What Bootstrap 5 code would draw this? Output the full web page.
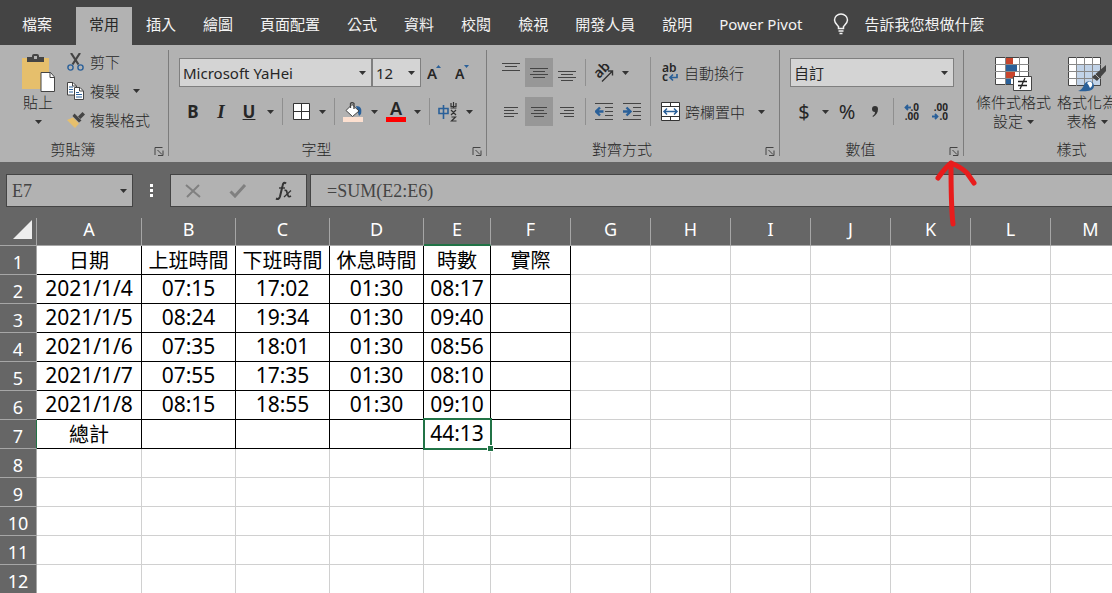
<!DOCTYPE html>
<html lang="zh-Hant">
<head>
<meta charset="utf-8">
<meta name="viewport" content="width=device-width, initial-scale=1">
<title>工時表</title>
<link href="https://cdn.jsdelivr.net/npm/bootstrap@5.3.0/dist/css/bootstrap.min.css" rel="stylesheet">
<style>
  :root { --chrome: #666; --panel: #b2b2b2; --ink: #262626; --blue: #2a6099; --green: #217346; }
  body { font-family: "Noto Sans", "Noto Sans CJK TC", sans-serif; font-size: 15px; line-height: 20px; color: var(--ink); background: #fff; overflow-x: hidden; }
  button { font: inherit; color: inherit; background: none; border: 0; padding: 0; }
  svg { display: block; flex: none; }
  svg text { font-family: "Noto Sans", "Noto Sans CJK TC", sans-serif; stroke: none; fill: #262626; }

  /* tab strip */
  .tabstrip { background: #444; padding: 7px 0 0 9px; white-space: nowrap; }
  .tabstrip .nav-link { color: #f3f3f3; padding: 7px 13px 11px; line-height: 20px; border-radius: 0; }
  .tabstrip .nav-link.active { background: var(--panel); color: var(--ink); }
  .tabstrip .file-tab { margin-right: 10px; }
  .tabs { gap: 1px; }
  .tell-me { gap: 15px; margin-left: 18px; padding-bottom: 4px; color: #f3f3f3; }

  /* ribbon */
  .ribbon { background: var(--panel); padding: 5px 0 6px; position: relative; z-index: 2; font-weight: 300; }
  .ribbon-group { display: flex; flex-direction: column; flex: none; height: 106px; border-right: 1px solid #7c7c7c; white-space: nowrap; }
  .g-clip { width: 169px; } .g-font { width: 318px; } .g-align { width: 293px; } .g-num { width: 184px; }
  .g-style { width: 215px; border: 0; }
  .group-body { flex: 1; }
  .group-name { position: relative; text-align: center; line-height: 14px; padding-right: 22px; }
  .g-style .group-name { padding-right: 0; }
  .launcher { position: absolute; right: 4px; bottom: 0; }
  .tools { display: flex; flex-direction: column; gap: 10px; padding: 8px 9px 0 10px; }
  .tool-row { display: flex; align-items: center; height: 29px; }
  .tool { width: 28px; height: 29px; display: flex; align-items: center; justify-content: center; flex: none; font-size: 17px; font-weight: 700; }
  .tool.on { background: #979797; }
  .tool.slant { font-family: "Liberation Serif", serif; font-style: italic; font-size: 19px; }
  .drop { width: 15px; height: 29px; display: flex; align-items: center; justify-content: center; flex: none; }
  .rule { width: 1px; height: 27px; margin: 0 4px; background: #8f8f8f; }
  .rule-tall { height: 69px; margin: 7px 0 0; }
  .ribbon .form-select { height: 29px; padding: 0 20px 0 3px; border: 1px solid #7f7f7f; border-radius: 0; background-color: #d4d4d4; font-size: 15px; line-height: 20px; color: var(--ink); }
  .form-select { background-image: url("data:image/svg+xml,%3Csvg xmlns='http://www.w3.org/2000/svg' viewBox='0 0 7 4'%3E%3Cpath d='M0 0h7L3.500 4z' fill='%23333'/%3E%3C/svg%3E"); background-size: 7px 4px; background-position: right 5px center; }
  .ribbon .family { width: 193px; } .ribbon .size { width: 49px; }
  .labelled { display: flex; align-items: center; gap: 5px; height: 29px; }
  .paste { margin-left: 20px; }
  .clip-col { display: flex; flex-direction: column; gap: 5px; padding-left: 3px; }
  .clip-col .labelled { height: 24px; }
  .large { display: flex; flex-direction: column; align-items: center; line-height: 19px; }
  .large-row { display: flex; gap: 6px; padding: 7px 0 0 12px; }
  .tool.money { font-weight: 400; font-size: 20px; }

  /* formula bar */
  .formula-bar { background: var(--chrome); padding: 12px 0 11px 6px; }
  .bar-box { height: 33px; border: 1px solid #444; border-radius: 0; background-color: var(--panel); }
  .formula-bar .form-control, .formula-bar .form-select { font-family: "Liberation Serif", serif; font-size: 18px; color: #444; padding: 2px 6px 0; }
  .formula-bar .form-select.name-box { width: 127px; padding: 2px 20px 0 5px; background-color: var(--panel); }
  .formula-bar .form-control { padding-left: 16px; border-right: 0; }
  .fx-box { width: 137px; margin-right: 3px; }
  .grip { width: 37px; flex: none; }

  /* grid */
  .sheet-wrap { overflow: hidden; }
  .sheet { table-layout: fixed; border-collapse: separate; border-spacing: 0; width: 1131px; text-align: center; }
  .sheet th, .sheet td { height: 29px; padding: 0; white-space: nowrap; border: 0 solid #d0d0d0; border-width: 0 1px 1px 0; }
  .sheet th { background: var(--chrome); color: #fff; font-weight: 400; font-size: 18px; border-color: #a6a6a6; }
  .sheet thead th { height: 28px; line-height: 23px; padding-bottom: 4px; }
  .sheet tbody th { line-height: 24px; padding-top: 4px; }
  .sheet td { font-size: 20px; line-height: 26px; padding-top: 2px; color: #000; }
  .sheet td.num { font-size: 21px; padding: 0 0 2px; }
  .sheet thead th.current { border-bottom: 2px solid var(--green); padding-bottom: 3px; }
  .sheet td.boxed { border-color: #000; }
  .sheet tbody th.current { border-right-color: var(--green); }
  .selected { position: relative; }
  .selected::before { content: ""; position: absolute; inset: -2px -2px -2px -1px; border: 2px solid var(--green); }
  .selected::after { content: ""; position: absolute; right: -4px; bottom: -4px; width: 7px; height: 7px; background: var(--green); border: 1px solid #fff; }
  .pointer { position: absolute; right: -14px; top: 17px; pointer-events: none; }
</style>
</head>
<body>
<svg width="0" height="0" class="position-absolute" aria-hidden="true">
  <symbol id="caret" viewBox="0 0 7 4"><path d="M0 0h7L3.500 4z" fill="#333"/></symbol>
  <symbol id="launch" viewBox="0 0 9 9"><path d="M.5 8V.5H8M3 3l4.500 4.500M8.500 3.500v5h-5" fill="none" stroke="#444"/></symbol>
</svg>

<header class="tabstrip d-flex align-items-center">
  <nav class="tabs nav flex-nowrap" aria-label="功能區">
    <a class="nav-link file-tab" href="#">檔案</a>
    <a class="nav-link active" aria-current="page" href="#">常用</a>
    <a class="nav-link" href="#">插入</a>
    <a class="nav-link" href="#">繪圖</a>
    <a class="nav-link" href="#">頁面配置</a>
    <a class="nav-link" href="#">公式</a>
    <a class="nav-link" href="#">資料</a>
    <a class="nav-link" href="#">校閱</a>
    <a class="nav-link" href="#">檢視</a>
    <a class="nav-link" href="#">開發人員</a>
    <a class="nav-link" href="#">說明</a>
    <a class="nav-link" href="#">Power Pivot</a>
  </nav>
  <button class="tell-me d-flex align-items-center" type="button">
    <svg width="16" height="22" viewBox="0 0 16 22" fill="none" stroke="#f3f3f3" stroke-width="1.500"><path d="M5.500 15.500v-2C3.500 11.500 1.500 10 1.500 7a6.500 6 0 0 1 13 0c0 3-2 4.500-4 6.500v2zM5.500 18h5M6.500 20.500h3"/></svg>
    <span>告訴我您想做什麼</span>
  </button>
</header>

<section class="ribbon d-flex">
  <div class="ribbon-group g-clip">
    <div class="group-body d-flex">
      <button class="large paste pt-1 me-2" type="button">
        <svg width="36" height="39" viewBox="0 0 36 39"><path d="M2 4h27v31H2z" fill="#e6bf6c"/><path d="M7 3h5V2q0-2 2-2h3q2 0 2 2v1h5v5H7z" fill="#444"/><path d="M14 2h3v3h-3z" fill="#b2b2b2"/><path d="M21 18.500h9.500l4 4.500v14.500H21z" fill="#fff" stroke="#444"/><path d="M30 18.500v5h5" fill="none" stroke="#444"/></svg>
        <span>貼上</span>
        <svg class="mt-2" width="7" height="4"><use href="#caret"/></svg>
      </button>
      <div class="clip-col">
        <button class="labelled" type="button">
          <svg width="18" height="18" viewBox="0 0 18 18" fill="none"><path d="M4 0l7.500 11.500M13 0L5.500 11.500" stroke="#444" stroke-width="2.200"/><circle cx="3.500" cy="14.500" r="2.600" stroke="#2a6099" stroke-width="1.400"/><circle cx="13.500" cy="14.500" r="2.600" stroke="#2a6099" stroke-width="1.400"/></svg>
          <span>剪下</span>
        </button>
        <button class="labelled" type="button">
          <svg width="18" height="18" viewBox="0 0 18 18" fill="#fff" stroke="#444"><path d="M.5.500H6L9.500 4v9h-9z"/><path d="M7.500 5.500H13L16.500 9v8.500h-9z"/><path d="M2 5h4M2 7.500h4M2 10h4M9 10.500h3M9 12.500h6M9 15h6" stroke="#2a6099"/><path d="M5.500.500V4H9M12.500 5.500V9H16" fill="none"/></svg>
          <span>複製</span>
          <svg class="ms-2" width="7" height="4"><use href="#caret"/></svg>
        </button>
        <button class="labelled" type="button">
          <svg width="18" height="16" viewBox="0 0 18 16"><path d="M0 8l6-2.500 6 6L8 16z" fill="#e6bf6c"/><path d="M5.500 4l2-2.500 7 7-2.500 2z" fill="#444"/><path d="M11 4.500L15.500 0 18 2.500 13.500 7z" fill="#444"/></svg>
          <span>複製格式</span>
        </button>
      </div>
    </div>
    <div class="group-name">剪貼簿<button class="launcher" type="button" aria-label="剪貼簿設定"><svg width="10" height="9"><use href="#launch"/></svg></button></div>
  </div>

  <div class="ribbon-group g-font">
    <div class="group-body tools">
      <div class="tool-row">
        <select class="form-select family" aria-label="字型名稱"><option>Microsoft YaHei</option></select>
        <select class="form-select size" aria-label="字型大小"><option>12</option></select>
        <button class="tool" type="button" aria-label="放大字型"><svg width="16" height="18" viewBox="0 0 16 18"><text x="0" y="15" font-size="15" font-weight="600">A</text><path d="M9 4l2.500-3L14 4z" fill="#2a6099"/></svg></button>
        <button class="tool" type="button" aria-label="縮小字型"><svg width="16" height="18" viewBox="0 0 16 18"><text x="0" y="15" font-size="14" font-weight="600">A</text><path d="M9 1l2.500 3L14 1z" fill="#2a6099"/></svg></button>
      </div>
      <div class="tool-row">
        <button class="tool" type="button">B</button>
        <button class="tool slant" type="button">I</button>
        <button class="tool text-decoration-underline" type="button">U</button>
        <button class="drop" type="button" aria-label="底線選項"><svg width="7" height="4"><use href="#caret"/></svg></button>
        <span class="rule"></span>
        <button class="tool" type="button" aria-label="框線"><svg width="17" height="17" viewBox="0 0 17 17" fill="#fff" stroke="#333"><path d="M.5.500h16v16H.5zM8.500 0v17M0 8.500h17"/></svg></button>
        <button class="drop" type="button" aria-label="框線選項"><svg width="7" height="4"><use href="#caret"/></svg></button>
        <span class="rule"></span>
        <button class="tool" type="button" aria-label="填滿色彩"><svg width="20" height="20" viewBox="0 0 20 20"><path d="M0 15h20v5H0z" fill="#fde0d0"/><path d="M13 4c5 0 6 3 5 8l-2 2z" fill="#2a6099"/><path d="M9 2.500l7 6.500-6.500 5.500L3 8.500z" fill="#fff" stroke="#444"/><path d="M7.500 6V1.500Q9-.5 11 1.500V7" fill="none" stroke="#444" stroke-width="1.300"/></svg></button>
        <button class="drop" type="button" aria-label="填滿選項"><svg width="7" height="4"><use href="#caret"/></svg></button>
        <button class="tool" type="button" aria-label="字型色彩"><svg width="20" height="22" viewBox="0 0 20 22"><text x="10" y="14" font-size="18" font-weight="600" text-anchor="middle">A</text><path d="M0 16h20v5H0z" fill="red"/></svg></button>
        <button class="drop" type="button" aria-label="色彩選項"><svg width="7" height="4"><use href="#caret"/></svg></button>
        <span class="rule"></span>
        <button class="tool" type="button" aria-label="注音標示"><svg width="20" height="20" viewBox="0 0 20 20" fill="none"><path d="M1 6.500h9v5H1zM5.500 3v14" stroke="#2a6099" stroke-width="1.600"/><path d="M15.500 0v6M13 1v3.500h5V1M12.500 6h6M13 8l5 5M18 8l-5 5M13.500 15h4l-4 4h5" stroke="#333" stroke-width="1.200"/></svg></button>
        <button class="drop" type="button" aria-label="注音選項"><svg width="7" height="4"><use href="#caret"/></svg></button>
      </div>
    </div>
    <div class="group-name">字型<button class="launcher" type="button" aria-label="字型設定"><svg width="10" height="9"><use href="#launch"/></svg></button></div>
  </div>

  <div class="ribbon-group g-align">
    <div class="group-body d-flex">
      <div class="tools pe-1">
        <div class="tool-row">
          <button class="tool" type="button" aria-label="靠上對齊"><svg width="18" height="20" viewBox="0 0 18 20" stroke="#444"><path d="M0 .5h18M3 3.500h12M0 7.500h18"/></svg></button>
          <button class="tool on" type="button" aria-label="置中對齊"><svg width="18" height="18" viewBox="0 0 18 18" stroke="#444"><path d="M0 4.500h18M3 7.500h12M0 10.500h18M3 13.500h12"/></svg></button>
          <button class="tool" type="button" aria-label="靠下對齊"><svg width="18" height="20" viewBox="0 0 18 20" stroke="#444"><path d="M0 8.500h18M3 11.500h12M0 14.500h18M3 17.500h12"/></svg></button>
          <span class="rule"></span>
          <button class="tool" type="button" aria-label="方向"><svg width="20" height="18" viewBox="0 0 20 18" fill="none" stroke="#333"><text x="5" y="15" font-size="14" font-weight="600" transform="rotate(-45 5 15)">ab</text><path d="M8 17.500L18 7.500M14 7h4.500v4.500" stroke-width="1.400"/></svg></button>
          <button class="drop" type="button" aria-label="方向選項"><svg width="7" height="4"><use href="#caret"/></svg></button>
        </div>
        <div class="tool-row">
          <button class="tool" type="button" aria-label="靠左對齊"><svg width="14" height="12" viewBox="0 0 14 12" stroke="#444"><path d="M0 1.500h14M0 4.500h10M0 7.500h14M0 10.500h10"/></svg></button>
          <button class="tool on" type="button" aria-label="置中"><svg width="16" height="12" viewBox="0 0 16 12" stroke="#444"><path d="M0 1.500h16M3 4.500h10M0 7.500h16M3 10.500h10"/></svg></button>
          <button class="tool" type="button" aria-label="靠右對齊"><svg width="14" height="12" viewBox="0 0 14 12" stroke="#444"><path d="M0 1.500h14M4 4.500h10M0 7.500h14M4 10.500h10"/></svg></button>
          <span class="rule"></span>
          <button class="tool" type="button" aria-label="減少縮排"><svg width="18" height="17" viewBox="0 0 18 17" fill="none" stroke="#444"><path d="M0 .5h18M10 4.500h8M10 8.500h8M10 12.500h8M0 16.500h18"/><path d="M8.500 8.500H2M5 4.500l-4 4 4 4" stroke="#2a6099" stroke-width="2.400"/></svg></button>
          <button class="tool" type="button" aria-label="增加縮排"><svg width="18" height="17" viewBox="0 0 18 17" fill="none" stroke="#444"><path d="M0 .5h18M10 4.500h8M10 8.500h8M10 12.500h8M0 16.500h18"/><path d="M0 8.500h7M3.500 4.500l4 4-4 4" stroke="#2a6099" stroke-width="2.400"/></svg></button>
        </div>
      </div>
      <span class="rule rule-tall"></span>
      <div class="tools">
        <button class="labelled" type="button">
          <svg width="18" height="20" viewBox="0 0 18 20" fill="none"><text x="1" y="9" font-size="12" font-weight="600">ab</text><text x="1" y="18" font-size="12" font-weight="600">c</text><path d="M16 11v3.500H9M12 11.500L9 14.500l3 3" stroke="#2a6099" stroke-width="1.700"/></svg>
          <span>自動換行</span>
        </button>
        <button class="labelled" type="button">
          <svg width="19" height="19" viewBox="0 0 19 19" fill="#fff" stroke="#333"><path d="M.5.500h18v18H.5zM0 4.500h19M0 14.500h19M9.500 0v4.500M9.500 14.500V19"/><path d="M3 9.500h13M6 6.500l-3 3 3 3M13 6.500l3 3-3 3" fill="none" stroke="#2a6099" stroke-width="1.500"/></svg>
          <span>跨欄置中</span>
          <svg class="ms-2" width="7" height="4"><use href="#caret"/></svg>
        </button>
      </div>
    </div>
    <div class="group-name">對齊方式<button class="launcher" type="button" aria-label="對齊設定"><svg width="10" height="9"><use href="#launch"/></svg></button></div>
  </div>

  <div class="ribbon-group g-num">
    <div class="group-body tools">
      <select class="form-select" aria-label="數值格式"><option>自訂</option></select>
      <div class="tool-row">
        <button class="tool money" type="button">$</button>
        <button class="drop" type="button" aria-label="會計格式"><svg width="7" height="4"><use href="#caret"/></svg></button>
        <button class="tool money" type="button">%</button>
        <button class="tool" type="button" aria-label="千分位樣式"><svg width="8" height="12" viewBox="0 0 8 12"><path d="M1 3a3 3 0 0 1 6 0c0 4-2 6-5 8l-.5-1C3 9 4 8 4 6 2 6 1 5 1 3z" fill="#333"/></svg></button>
        <span class="rule"></span>
        <button class="tool" type="button" aria-label="增加小數位數"><svg width="16" height="18" viewBox="0 0 16 18" fill="none"><text x="15" y="8" font-size="10" text-anchor="end">.0</text><text x="15" y="17" font-size="10" text-anchor="end">.00</text><path d="M7 4.500H1.500M4 2L1.500 4.500 4 7" stroke="#2a6099" stroke-width="1.800"/></svg></button>
        <button class="tool" type="button" aria-label="減少小數位數"><svg width="16" height="18" viewBox="0 0 16 18" fill="none"><text x="16" y="8" font-size="10" text-anchor="end">.00</text><text x="16" y="17" font-size="10" text-anchor="end">.0</text><path d="M0 13.500h5.500M3 11l2.500 2.500L3 16" stroke="#2a6099" stroke-width="1.800"/></svg></button>
      </div>
    </div>
    <div class="group-name">數值<button class="launcher" type="button" aria-label="數值設定"><svg width="10" height="9"><use href="#launch"/></svg></button>
      <svg class="pointer" width="42" height="68" viewBox="0 0 42 68" fill="none" stroke="#e81c1c" stroke-width="5" stroke-linecap="round" stroke-linejoin="round"><path d="M18 65C16 49 16 26 16 4M3 19Q10 9 16 4Q26 8 32 14L39 24"/></svg>
    </div>
  </div>

  <div class="ribbon-group g-style">
    <div class="group-body large-row">
      <button class="large" type="button">
        <svg width="37" height="36" viewBox="0 0 37 36"><path d="M.5.500h33v27H.5z" fill="#fff" stroke="#444"/><path d="M0 7.500h34M0 14.500h34M0 21.500h34M10.500 0v28M24.500 0v28" stroke="#888" fill="none"/><path d="M11 1h7v6h-7zM11 15h9v6h-9z" fill="#c8452d"/><path d="M11 8h11v6H11zM11 22h5v5h-5z" fill="#2a6099"/><path d="M18.500 19.500h18v14h-18z" fill="#fff" stroke="#444"/><path d="M23 24.500h9M23 28.500h9M30 21l-5 11" stroke="#222" stroke-width="1.300"/></svg>
        <span>條件式格式</span>
        <span class="d-flex align-items-center gap-1">設定<svg width="7" height="4"><use href="#caret"/></svg></span>
      </button>
      <button class="large" type="button">
        <svg width="38" height="36" viewBox="0 0 38 36"><path d="M.5.500h32v28H.5z" fill="#fff" stroke="#444"/><path d="M9 8h23v20H9z" fill="#c1d3e8"/><path d="M0 7.500h33M0 14.500h33M0 21.500h33M8.500 0v29M16.500 0v29M24.500 0v29" stroke="#888" fill="none"/><path d="M38 8v6l-9 10-5-4z" fill="#444"/><path d="M27 17l5 5" stroke="#b2b2b2"/><path d="M10 34q4-1 6-6c3-6 10-4 10 1s-8 6-16 5z" fill="#2a6099"/><path d="M19 26q3-3 5 0 1 3-2 5-1-3-3-5z" fill="#fff"/></svg>
        <span>格式化為</span>
        <span class="d-flex align-items-center gap-1">表格<svg width="7" height="4"><use href="#caret"/></svg></span>
      </button>
    </div>
    <div class="group-name">樣式</div>
  </div>
</section>

<section class="formula-bar d-flex align-items-center">
  <select class="form-select bar-box name-box flex-shrink-0" aria-label="名稱方塊"><option>E7</option></select>
  <span class="grip d-flex justify-content-center"><svg width="3" height="13" fill="#fff"><path d="M0 0h3v3H0zM0 5h3v3H0zM0 10h3v3H0z"/></svg></span>
  <div class="bar-box fx-box d-flex align-items-center justify-content-around flex-shrink-0">
    <button type="button" aria-label="取消"><svg width="16" height="14" viewBox="0 0 16 14"><path d="M1 1l14 12M14 1L2 13" stroke="#808080" stroke-width="2"/></svg></button>
    <button type="button" aria-label="輸入"><svg width="18" height="14" viewBox="0 0 18 14"><path d="M1.500 7.500L6 12 16 1" stroke="#808080" stroke-width="3" fill="none"/></svg></button>
    <button type="button" aria-label="插入函數"><svg width="17" height="20" viewBox="0 0 17 20" fill="none" stroke="#333"><path d="M11 2.500Q8.500 0 7.500 5L5 15.500Q4 19 1 17.500" stroke-width="2"/><path d="M4 7h6" stroke-width="1.400"/><path d="M9.500 9.500q2-1 2.500 2l1 3q.5 2 3 .5" stroke-width="1.700"/><path d="M16 9.500l-7 6.500" stroke-width="1.200"/></svg></button>
  </div>
  <input class="form-control bar-box" type="text" value="=SUM(E2:E6)" aria-label="資料編輯列">
</section>

<main class="sheet-wrap">
  <table class="sheet">
    <colgroup id="cols"></colgroup>
    <thead><tr id="letters"></tr></thead>
    <tbody id="rows"></tbody>
  </table>
</main>

<script src="https://cdn.jsdelivr.net/npm/bootstrap@5.3.0/dist/js/bootstrap.bundle.min.js"></script>
<script>
  const widths = [37, 105, 94, 94, 94, 67, 80, 80, 80, 80, 80, 80, 80, 80];
  const data = [
    ["日期", "上班時間", "下班時間", "休息時間", "時數", "實際"],
    ["2021/1/4", "07:15", "17:02", "01:30", "08:17", ""],
    ["2021/1/5", "08:24", "19:34", "01:30", "09:40", ""],
    ["2021/1/6", "07:35", "18:01", "01:30", "08:56", ""],
    ["2021/1/7", "07:55", "17:35", "01:30", "08:10", ""],
    ["2021/1/8", "08:15", "18:55", "01:30", "09:10", ""],
    ["總計", "", "", "", "44:13", ""]
  ];
  const letters = [..."ABCDEFGHIJKLM"];
  document.getElementById("cols").innerHTML = widths.map(w => `<col style="width:${w}px">`).join("");
  document.getElementById("letters").innerHTML =
    `<th aria-label="全選"><svg class="ms-auto me-1" width="19" height="19" viewBox="0 0 19 19"><path d="M19 0v19H0z" fill="#eee"/></svg></th>` +
    letters.map(l => `<th scope="col"${l === "E" ? ' class="current"' : ""}>${l}</th>`).join("");
  let html = "";
  for (let r = 0; r < 12; r++) {
    html += `<tr><th scope="row"${r === 6 ? ' class="current"' : ""}>${r + 1}</th>`;
    letters.forEach((l, c) => {
      const inside = r < data.length && c < 6;
      const text = inside ? data[r][c] : "";
      const cls = [inside && "boxed", /\d/.test(text) && "num", r === 6 && c === 4 && "selected"].filter(Boolean).join(" ");
      html += `<td class="${cls}">${text}</td>`;
    });
    html += "</tr>";
  }
  document.getElementById("rows").innerHTML = html;
</script>
</body>
</html>
